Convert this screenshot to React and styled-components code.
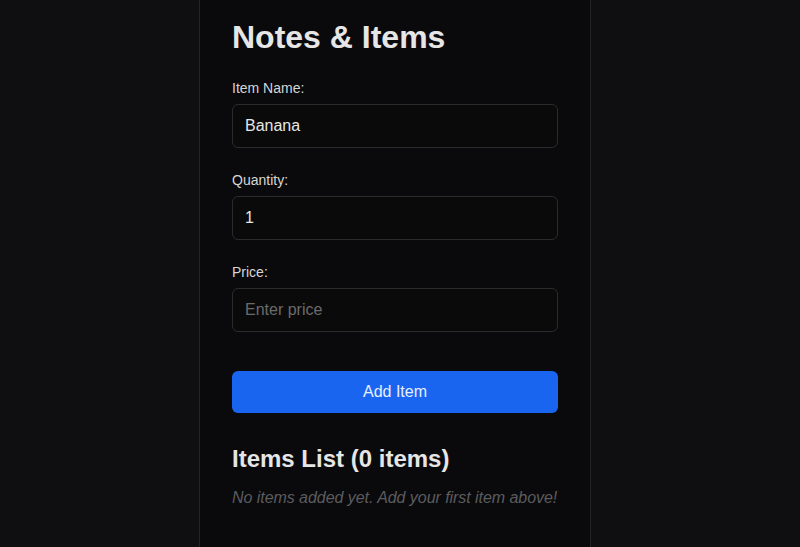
import React, { useState } from 'react';
import styled, { createGlobalStyle } from 'styled-components';

const GlobalStyle = createGlobalStyle`
  html, body {
    margin: 0;
    padding: 0;
    background: #0f0f11;
    font-family: "Liberation Sans", Arial, sans-serif;
    color: #e8e8e8;
  }
  * { box-sizing: border-box; }
`;

const Page = styled.div`
  min-height: 100vh;
  display: flex;
  justify-content: center;
  padding-right: 10px;
`;

const Panel = styled.main`
  width: 392px;
  min-height: 547px;
  background: #0a0a0c;
  border-left: 1px solid #232326;
  border-right: 1px solid #232326;
  padding: 19px 32px 32px;
`;

const Title = styled.h1`
  margin: 0 0 24px;
  font-size: 32px;
  font-weight: 700;
  color: #e6e6e6;
`;

const Field = styled.div`
  margin-bottom: ${({ $last }) => ($last ? '0' : '24px')};
`;

const Label = styled.label`
  display: block;
  margin-bottom: 8px;
  font-size: 14px;
  line-height: 16px;
  color: #d6d6d6;
`;

const Input = styled.input`
  display: block;
  width: 100%;
  height: 44px;
  padding: 0 12px;
  background: #0a0a0a;
  border: 1px solid #2b2b2e;
  border-radius: 6px;
  font-family: inherit;
  font-size: 16px;
  color: #e6e6e6;
  outline: none;

  &::placeholder {
    color: #6a6a6c;
  }
`;

const Button = styled.button`
  display: block;
  width: 100%;
  height: 42px;
  margin-top: 39px;
  background: #1a65ef;
  border: none;
  border-radius: 6px;
  font-family: inherit;
  font-size: 16px;
  color: #e9efff;
  cursor: pointer;
`;

const ListTitle = styled.h2`
  margin: 32px 0 0;
  font-size: 24px;
  line-height: 28px;
  font-weight: 700;
  color: #e6e6e6;
`;

const Empty = styled.p`
  margin: 16px 0 0;
  font-size: 16px;
  font-style: italic;
  white-space: nowrap;
  letter-spacing: -0.05px;
  color: #5c5c5f;
`;

const App = () => {
  const [name, setName] = useState('Banana');
  const [qty, setQty] = useState('1');
  const [price, setPrice] = useState('');
  const items = [];

  return (
    <Page>
      <GlobalStyle />
      <Panel>
        <Title>Notes &amp; Items</Title>
        <Field>
          <Label htmlFor="name">Item Name:</Label>
          <Input id="name" value={name} onChange={e => setName(e.target.value)} />
        </Field>
        <Field>
          <Label htmlFor="qty">Quantity:</Label>
          <Input id="qty" value={qty} onChange={e => setQty(e.target.value)} />
        </Field>
        <Field $last>
          <Label htmlFor="price">Price:</Label>
          <Input id="price" placeholder="Enter price" value={price} onChange={e => setPrice(e.target.value)} />
        </Field>
        <Button>Add Item</Button>
        <ListTitle>Items List ({items.length} items)</ListTitle>
        {items.length === 0 && <Empty>No items added yet. Add your first item above!</Empty>}
      </Panel>
    </Page>
  );
};

export default App;
